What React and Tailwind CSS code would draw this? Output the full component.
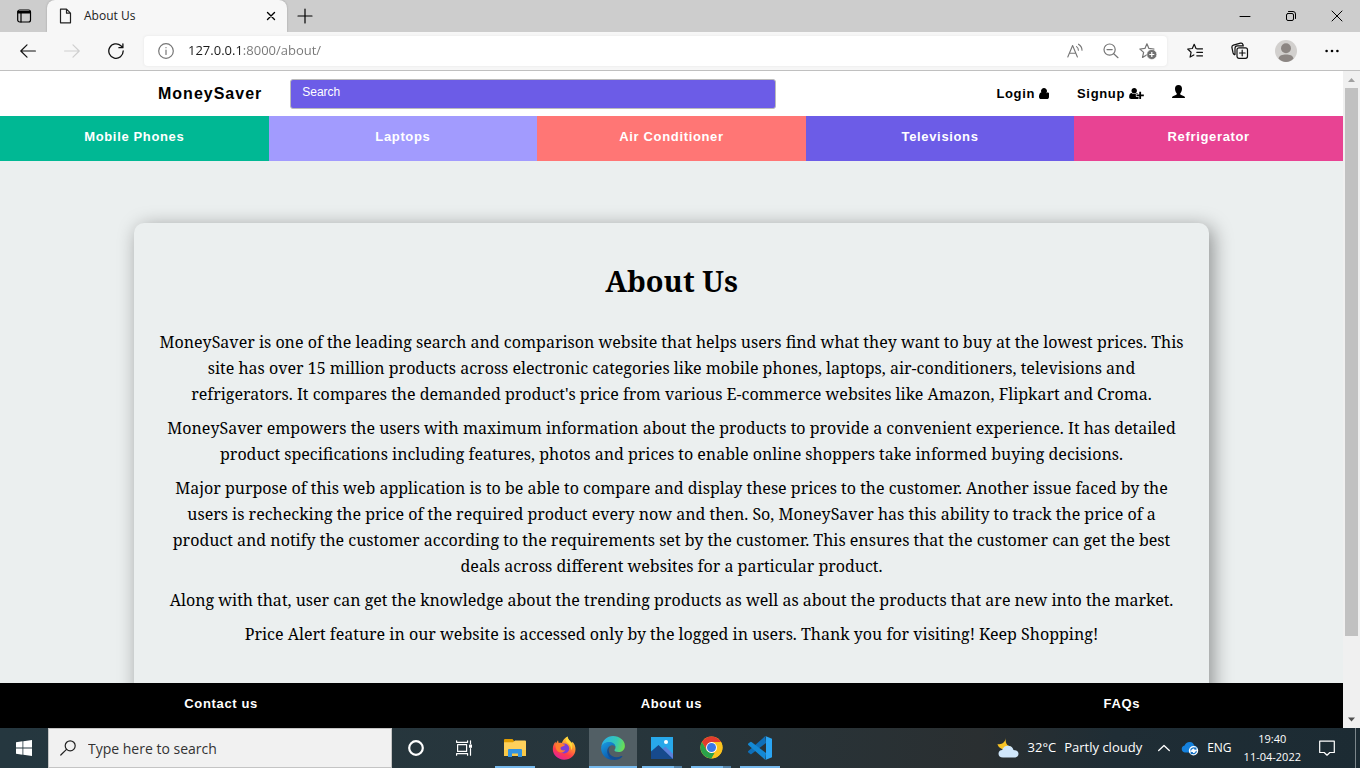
import React from "react";

const Line = ({ className = "size-4", children, w = 1.2, box = 16 }) => (
  <svg
    className={className}
    viewBox={`0 0 ${box} ${box}`}
    fill="none"
    stroke="currentColor"
    strokeWidth={w}
    strokeLinecap="round"
    strokeLinejoin="round"
    aria-hidden="true"
  >
    {children}
  </svg>
);

const IconButton = ({ label, className = "", children }) => (
  <button
    type="button"
    aria-label={label}
    className={`flex shrink-0 items-center justify-center ${className}`}
  >
    {children}
  </button>
);

const STAR = "M7.2 1.2 9 5.4l4.6.5-3.4 3.1 1 4.6-4-2.4-4 2.4 1-4.6L.8 5.9l4.6-.5z";

function TabStrip() {
  return (
    <div className="flex h-8 shrink-0 items-stretch bg-[#cdcdcd]">
      <IconButton label="Tab actions" className="w-12">
        <Line className="size-4" w={1.2}>
          <rect x="1.7" y="2" width="12.8" height="12" rx="2" />
          <path d="M2 3.600h12.200M2 4.800h12.200M5 5v9" />
        </Line>
      </IconButton>
      <div className="-ml-px flex w-60 items-center rounded-t-lg bg-[#f7f7f7] pr-2 pl-[11px] shadow-[0_0_2px_#999]">
        <Line className="size-4 text-[#222]">
          <path d="M2.500 1.200h6l4 4v9.600h-10zM8.500 1.200v4h4" />
        </Line>
        <span className="ml-[10px] flex-1 text-[12px] text-[#222]">About Us</span>
        <IconButton label="Close tab" className="size-4">
          <Line w={1.4}>
            <path d="m4.500 4.500 7 7m0-7-7 7" />
          </Line>
        </IconButton>
      </div>
      <IconButton label="New tab" className="w-[35px]">
        <Line w={1.2}>
          <path d="M8 1v14M1 8h14" />
        </Line>
      </IconButton>
      <div className="ml-auto flex">
        <IconButton label="Minimize" className="w-[46px]">
          <Line w={1} className="size-3" box={12}>
            <path d="M1 6.500h10" />
          </Line>
        </IconButton>
        <IconButton label="Restore" className="w-[46px]">
          <Line w={1} className="size-3" box={12}>
            <rect x="1.500" y="3.500" width="7" height="7" rx="1.500" />
            <path d="M3.500 1.500H8a2.500 2.500 0 0 1 2.500 2.500v4.500" />
          </Line>
        </IconButton>
        <IconButton label="Close window" className="w-[46px]">
          <Line w={1} className="size-3" box={12}>
            <path d="m1 1 10 10m0-10L1 11" />
          </Line>
        </IconButton>
      </div>
    </div>
  );
}

function Toolbar() {
  return (
    <div className="flex h-[39px] shrink-0 items-center border-b border-[#c0c0c0] bg-[#f7f7f7] pl-5">
      <IconButton label="Back" className="size-4 text-[#111]">
        <Line>
          <path d="M.8 8h14.600M7 1.800.8 8 7 14.200" />
        </Line>
      </IconButton>
      <IconButton label="Forward" className="ml-7 size-4 text-[#cfcfcf]">
        <Line>
          <path d="M.6 8h14.600M9 1.800 15.200 8 9 14.200" />
        </Line>
      </IconButton>
      <IconButton label="Refresh" className="ml-7 size-4 text-[#111]">
        <Line w={1.3}>
          <path d="M15.200 8a7.200 7.200 0 1 1-2.300-5.200l1.900 1.800M14.900.8v3.900h-4" />
        </Line>
      </IconButton>
      <div className="ml-5 flex h-[30px] min-w-0 flex-1 items-center rounded bg-white pr-[10px] pl-[14px] shadow-[0_0_3px_#e4e4e4]">
        <IconButton label="View site information" className="size-4 text-[#767676]">
          <Line w={1.2}>
            <circle cx="8" cy="8" r="7.300" />
            <path d="M8 7v4.500M8 4.500v.2" />
          </Line>
        </IconButton>
        <input
          aria-label="Address"
          defaultValue="127.0.0.1:8000/about/"
          className="ml-[14px] min-w-0 flex-1 bg-[linear-gradient(to_right,#1b1b1b_54px,#767676_54px)] bg-clip-text text-[13px] text-transparent outline-none"
        />
        <div className="flex items-center gap-5 text-[#767676]">
          <IconButton label="Read aloud" className="size-4">
            <Line w={1.1}>
              <path d="M.8 14 5.600 2.500 10.400 14M2.500 10.200h6.300M9.500 3.600c1.300.9 1.900 2.100 1.900 3.600M11.500 1.200c2.300 1.500 3.500 3.500 3.500 6" />
            </Line>
          </IconButton>
          <IconButton label="Zoom" className="size-4">
            <Line w={1.2}>
              <circle cx="6.600" cy="6.600" r="5.600" />
              <path d="M4 6.600h5.200M10.700 10.700l4.300 4" />
            </Line>
          </IconButton>
          <IconButton label="Add to favorites" className="size-[18px]">
            <svg viewBox="0 0 18 18" className="size-[18px]" aria-hidden="true">
              <path d={STAR} transform="translate(0 .5) scale(1.100)" fill="none" stroke="currentColor" strokeWidth="1.100" strokeLinejoin="round" />
              <circle cx="12.800" cy="12.500" r="5" fill="#6f6f6f" stroke="#fff" strokeWidth=".6" />
              <path d="M12.800 10v5M10.300 12.500h5" stroke="#fff" strokeWidth="1.200" />
            </svg>
          </IconButton>
        </div>
      </div>
      <div className="flex items-center text-[#111]">
        <IconButton label="Favorites" className="ml-5 size-4">
          <Line w={1.2}>
            <path d="M9 5.500 7.200 1.300 5.300 5.500l-4.600.5 3.400 3.200-1 4.900 3.700-2.200M9.800 5.800H15.500M9.800 9.300h5.700M9.800 12.800h5.700" />
          </Line>
        </IconButton>
        <IconButton label="Collections" className="ml-7 size-[18px]">
          <Line className="size-[18px]" box={18} w={1.2}>
            <rect x="6" y="5.800" width="10.500" height="10.500" rx="2" />
            <path d="M11.200 8.200v5.600M8.500 11h5.600M3.600 12.800C2.700 12.400 2.300 11.800 2.100 11L.9 5.500c-.2-1.200.3-2 1.500-2.400L9.500 1.200c1.300-.3 2.200.3 2.600 1.800M4 12.500V6.200c0-1.500 1-2.400 2.300-2.400h6.200" />
          </Line>
        </IconButton>
        <IconButton label="Profile" className="ml-[26px] size-[22px]">
          <svg viewBox="0 0 22 22" className="size-[22px]" aria-hidden="true">
            <circle cx="11" cy="11" r="11" fill="#d2d0ce" />
            <circle cx="11" cy="8.300" r="5" fill="#8c8683" />
            <path d="M3.500 18.500c.8-3.300 3.800-4 7.500-4s6.700.7 7.500 4C16.500 20.800 14 22 11 22s-5.500-1.200-7.500-3.500z" fill="#8c8683" />
          </svg>
        </IconButton>
        <IconButton label="Settings and more" className="mr-5 ml-[27px] size-4">
          <svg viewBox="0 0 16 16" className="size-4" aria-hidden="true">
            <circle cx="2.600" cy="8" r="1.300" />
            <circle cx="8" cy="8" r="1.300" />
            <circle cx="13.400" cy="8" r="1.300" />
          </svg>
        </IconButton>
      </div>
    </div>
  );
}

const CATEGORIES = [
  ["Mobile Phones", "bg-[#00b894]"],
  ["Laptops", "bg-[#a29bfe]"],
  ["Air Conditioner", "bg-[#ff7675]"],
  ["Televisions", "bg-[#6c5ce7]"],
  ["Refrigerator", "bg-[#e84393]"],
];

const PARAGRAPHS = [
  "MoneySaver is one of the leading search and comparison website that helps users find what they want to buy at the lowest prices. This site has over 15 million products across electronic categories like mobile phones, laptops, air-conditioners, televisions and refrigerators. It compares the demanded product's price from various E-commerce websites like Amazon, Flipkart and Croma.",
  "MoneySaver empowers the users with maximum information about the products to provide a convenient experience. It has detailed product specifications including features, photos and prices to enable online shoppers take informed buying decisions.",
  "Major purpose of this web application is to be able to compare and display these prices to the customer. Another issue faced by the users is rechecking the price of the required product every now and then. So, MoneySaver has this ability to track the price of a product and notify the customer according to the requirements set by the customer. This ensures that the customer can get the best deals across different websites for a particular product.",
  "Along with that, user can get the knowledge about the trending products as well as about the products that are new into the market.",
  "Price Alert feature in our website is accessed only by the logged in users. Thank you for visiting! Keep Shopping!",
];

const UserIcon = () => (
  <svg viewBox="0 128 1280 1408" className="h-[11px] w-[10px]" fill="currentColor" aria-hidden="true">
    <path d="M1280 1271q0 120-73 189.500t-194 69.500h-746q-121 0-194-69.500t-73-189.500q0-53 3.500-103.500t14-109 26.500-108.500 43-97.500 62-81 85.500-53.500 111.500-20q9 0 42 21.500t74.500 48 108 48 133.500 21.500 133.500-21.500 108-48 74.500-48 42-21.500q61 0 111.500 20t85.500 53.500 62 81 43 97.500 26.500 108.500 14 109 3.500 103.500zM1024 512q0 159-112.500 271.500t-271.500 112.500-271.500-112.500-112.500-271.500 112.500-271.500 271.500-112.500 271.500 112.500 112.500 271.500z" />
  </svg>
);

const UserPlusIcon = () => (
  <svg viewBox="0 128 2048 1536" className="h-[11px] w-[15px]" fill="currentColor" aria-hidden="true">
    <path d="M704 896q-159 0-271.500-112.500t-112.500-271.500 112.500-271.500 271.500-112.500 271.500 112.500 112.500 271.500-112.500 271.500-271.500 112.500zM1664 1024h352q13 0 22.500 9.500t9.500 22.500v192q0 13-9.500 22.500t-22.500 9.500h-352v352q0 13-9.500 22.500t-22.500 9.500h-192q-13 0-22.500-9.500t-9.500-22.500v-352h-352q-13 0-22.500-9.500t-9.500-22.500v-192q0-13 9.500-22.500t22.500-9.500h352v-352q0-13 9.500-22.500t22.500-9.500h192q13 0 22.500 9.500t9.500 22.500v352zM928 1248q0 52 38 90t90 38h256v238q-68 50-171 50h-874q-121 0-194-69t-73-190q0-53 3.500-103.500t14-109 26.500-108.500 43-97.500 62-81 85.500-53.500 111.500-20q19 0 39 17 79 61 154.500 91.500t164.500 30.500 164.500-30.500 154.500-91.500q20-17 39-17 132 0 217 96h-223q-52 0-90 38t-38 90v192z" />
  </svg>
);

function Site() {
  return (
    <div className="flex min-w-0 flex-1 flex-col overflow-hidden bg-[#ebefef] font-['Liberation_Sans',Arial,sans-serif] text-[13px] font-bold tracking-wider">
      <header className="flex h-[45px] shrink-0 items-center bg-white px-[158px] text-black">
        <a href="/" className="text-[16px] tracking-[1px]">
          MoneySaver
        </a>
        <input
          type="search"
          aria-label="Search"
          placeholder="Search"
          className="ml-7 h-[30px] w-[486px] rounded-[3px] border border-[#bbb] bg-[#6c5ce7] px-[11px] pb-[3px] text-[12px] font-normal tracking-normal text-white outline-none placeholder:text-white"
        />
        <nav className="ml-auto flex items-center gap-7">
          <a href="/login" className="flex items-center gap-1">
            Login <UserIcon />
          </a>
          <a href="/signup" className="flex items-center gap-1">
            Signup <UserPlusIcon />
          </a>
          <a href="/profile" aria-label="Profile" className="pb-1">
            <svg viewBox="0 0 13 13" className="size-[13px]" aria-hidden="true">
              <path d="M6.500 0C8.800 0 10 1.500 10 3.700c0 1.800-.7 3.600-1.700 4.500v.8c0 .6.300.8.9 1l2.300.9c1 .4 1.500.9 1.500 2.100H0c0-1.200.5-1.700 1.500-2.100l2.300-.9c.6-.2.9-.4.9-1v-.8C3.700 7.300 3 5.500 3 3.700 3 1.500 4.200 0 6.500 0z" />
            </svg>
          </a>
        </nav>
      </header>
      <nav className="grid h-[45px] shrink-0 grid-cols-5 text-center leading-[42px] text-white">
        {CATEGORIES.map(([name, color]) => (
          <a key={name} href="#" className={color}>
            {name}
          </a>
        ))}
      </nav>
      <main className="min-h-0 flex-1 overflow-hidden px-[10%] pt-[62px] font-['Noto_Serif',Cambria,serif] font-normal tracking-normal text-black">
        <article className="min-h-[520px] rounded-[10px] bg-[#ebefef] px-6 pt-9 text-center text-[16px] leading-[26px] shadow-[4px_4px_20px_rgba(0,0,0,0.4)]">
          <h1 className="mb-[26px] text-[29px] leading-[44px] font-bold">About Us</h1>
          {PARAGRAPHS.map((text) => (
            <p key={text} className="mb-2">
              {text}
            </p>
          ))}
        </article>
      </main>
      <footer className="relative -mx-1 grid h-[45px] shrink-0 grid-cols-3 bg-black text-center leading-[42px] text-white">
        <a href="#">Contact us</a>
        <a href="#">About us</a>
        <a href="#">FAQs</a>
      </footer>
    </div>
  );
}

function Scrollbar() {
  return (
    <div className="flex w-[17px] shrink-0 flex-col items-center bg-[#f0f0f0]" aria-hidden="true">
      <svg viewBox="0 0 17 17" className="size-[17px] shrink-0">
        <path d="M5 11l3.500-4 3.500 4z" fill="#a0a0a0" />
      </svg>
      <div className="min-h-0 w-[13px] grow-[88] bg-[#c1c1c1]" />
      <div className="min-h-0 grow-[12]" />
      <svg viewBox="0 0 17 17" className="size-[17px] shrink-0">
        <path d="M5 6.500l3.500 4 3.500-4z" fill="#505050" />
      </svg>
    </div>
  );
}

const ExplorerIcon = () => (
  <svg viewBox="0 0 22 18" className="w-[22px]" aria-hidden="true">
    <path d="M0 1a1 1 0 0 1 1-1h7.500l1.500 2v3H0z" fill="#e09c00" />
    <path d="M0 3.200h9l2-1.700h10a1 1 0 0 1 1 1V17H0z" fill="#fdd05b" />
    <path d="M0 11h22v6H0z" fill="#f9c846" />
    <path d="M4 18v-7a1 1 0 0 1 1-1h12a1 1 0 0 1 1 1v7h-4v-3.500H8V18z" fill="#3393df" />
  </svg>
);

const FirefoxIcon = () => (
  <svg viewBox="0 0 24 24" className="size-6" aria-hidden="true">
    <defs>
      <linearGradient id="ff" x1=".8" y1="0" x2=".3" y2="1">
        <stop offset="0" stopColor="#fff04a" />
        <stop offset=".35" stopColor="#ff9b2c" />
        <stop offset=".7" stopColor="#ff3b4b" />
        <stop offset="1" stopColor="#e0219c" />
      </linearGradient>
    </defs>
    <path d="M15.500.5c.5 2.600 1.600 3.700 3.200 5.200.6.500 1 1 1.200 1.500l.6-1.400c2 2.200 3 4.800 3 7.400 0 6-5 10.500-11.300 10.500C5.800 23.700.8 18.900.8 13c0-3 1-5.500 2.700-7.300l.4 1.800L6 4.200l.7 2.900c1-.4 2.200-.4 3.200 0 .8-3 2.800-5.300 5.600-6.600z" fill="url(#ff)" />
    <circle cx="12.200" cy="12.500" r="5" fill="#7a3fd8" />
    <path d="M3.600 8.200c1.800-1.300 4.300-1.700 6.500-.4 1 .5 1.700.7 3 .8-.6 1.500-1.600 1.800-3.200 2.100-1.100.3-1.600 1-1.200 2.300.8 1.800 3 1.600 4.500 1-1.200 2.800-5 3.400-7.300 1.600-1.900-1.500-2.600-4.300-2.300-7.400z" fill="#ff7d2d" />
    <path d="M15 6.500c3 1.500 4.500 4.500 4 7.500 1.300-.8 1.600-3 .9-6.800-1-1.700-3.900-3-4.400-6.700-2 1.800-2 4.500-.5 6z" fill="#ffd93b" />
  </svg>
);

const EdgeIcon = () => (
  <svg viewBox="0 0 24 24" className="size-6" aria-hidden="true">
    <defs>
      <linearGradient id="eg" x1="0" y1=".4" x2="1" y2=".6">
        <stop offset="0" stopColor="#2bb0e8" />
        <stop offset=".6" stopColor="#35c8b4" />
        <stop offset="1" stopColor="#6ee04c" />
      </linearGradient>
      <linearGradient id="eb" x1="0" y1="0" x2=".6" y2="1">
        <stop offset="0" stopColor="#1b9de2" />
        <stop offset="1" stopColor="#0a55a8" />
      </linearGradient>
    </defs>
    <path d="M.4 10.500C1.200 4.500 6.200.1 12 .1c6.600 0 11.900 4.500 11.900 9.800 0 3.700-3 6.100-6.300 6.100-2.900 0-4.200-.9-4.200-1.700 0-.6 1.100-1 1.100-2.700 0-2.800-2.800-5-6.300-5C5 6.600 2 8 .4 10.500z" fill="url(#eg)" />
    <path d="M.1 12.200C.1 8.500 4 6 8 6c3.500 0 6.400 2 6.500 5-1-1.300-2.500-2-4-1.700C7.600 10 6 12.600 6.400 15.500c.5 4 3.300 6.800 6.600 8.400C5.700 24.400.1 19 .1 12.200z" fill="url(#eb)" />
    <path d="M10 10c-2 .9-2.900 3.600-2 6.200 1.700 4.700 7.600 6.500 12.200 3.900.8-.4 1.400 0 1 .6C19 23.300 16 24 13 23.900 8.500 22.500 6 18.800 6.300 15c.2-2.300 1.700-4.300 3.700-5z" fill="#144d93" />
  </svg>
);

const PhotosIcon = () => (
  <svg viewBox="0 0 22 22" className="size-[22px]" aria-hidden="true">
    <path d="M0 0h22v22H0z" fill="#28a8ea" />
    <path d="M10 13l4.500-3.500L22 17v5H10z" fill="#5c7fd8" />
    <path d="M0 14.500 7.500 8 22 22H0z" fill="#174a8c" />
    <circle cx="15" cy="5" r="2" fill="#fff" />
  </svg>
);

const ChromeIcon = () => (
  <svg viewBox="0 0 24 24" className="size-[23px]" aria-hidden="true">
    <circle cx="12" cy="12" r="11.500" fill="#fcc31e" />
    <path d="M2 6.300A11.500 11.500 0 0 1 22 6.300H12L7 14.900z" fill="#e33b2e" />
    <path d="M2 6.300 7 14.900A5.700 5.700 0 0 0 12 17.700h3.500L12 23.500A11.500 11.500 0 0 1 2 6.300z" fill="#2aa24b" />
    <path d="M17 14.900 12 23.500A11.500 11.500 0 0 0 22 6.300H12z" fill="#fcc31e" />
    <circle cx="12" cy="12" r="5.700" fill="#fff" />
    <circle cx="12" cy="12" r="4.700" fill="#3b78e7" />
  </svg>
);

const CodeIcon = () => (
  <svg viewBox="0 0 24 24" className="size-6" aria-hidden="true">
    <path d="M17.300 0 18 7 3.500 17.900a.9.900 0 0 1-1.200 0L.3 16.400a.9.900 0 0 1 0-1.300z" fill="#0f6fb8" />
    <path d="M17.300 24 .3 8.900a.9.900 0 0 1 0-1.300l2-1.500a.9.900 0 0 1 1.200 0L18 17z" fill="#1489d4" />
    <path d="M17.300 0 24 2.800v18.400L17.300 24c.5-.2.700-.6.700-1.200V1.200c0-.6-.2-1-.7-1.200z" fill="#2aa5f3" />
  </svg>
);

const APPS = [
  { label: "File Explorer", icon: ExplorerIcon, open: 1 },
  { label: "Firefox", icon: FirefoxIcon },
  { label: "Microsoft Edge", icon: EdgeIcon, active: true },
  { label: "Photos", icon: PhotosIcon, open: 2 },
  { label: "Google Chrome", icon: ChromeIcon, open: 2 },
  { label: "Visual Studio Code", icon: CodeIcon, open: 1 },
];

function Taskbar() {
  return (
    <div className="flex h-10 shrink-0 items-stretch bg-[linear-gradient(to_right,#25373f,#27353b_50%,#2a2f31_72%,#1f2d35_82%,#1c2b33)] text-white">
      <IconButton label="Start" className="w-12">
        <svg viewBox="0 0 16 16" className="size-4" fill="#fff" aria-hidden="true">
          <path d="M0 2.200 6.500 1.300V7.600H0zM7.300 1.200 16 0v7.600H7.300zM0 8.400h6.500v6.300L0 13.800zM7.300 8.400H16V16l-8.700-1.200z" />
        </svg>
      </IconButton>
      <label className="flex w-[344px] items-center gap-3 border border-[#c4c4c4] bg-[#f1f1f1] pl-[11px] text-[#222]">
        <Line w={1.2}>
          <circle cx="10.200" cy="5.800" r="5" />
          <path d="M6.500 9.300.8 15" />
        </Line>
        <input
          aria-label="Type here to search"
          placeholder="Type here to search"
          className="min-w-0 flex-1 bg-transparent text-[14px] outline-none placeholder:text-[#333]"
        />
      </label>
      <IconButton label="Cortana" className="w-12">
        <Line w={2.2}>
          <circle cx="8" cy="8" r="6.800" />
        </Line>
      </IconButton>
      <IconButton label="Task view" className="w-12">
        <Line w={1.2}>
          <rect x="1.600" y="4.600" width="9" height="6.800" />
          <path d="M.6.800v1.500h11V.8M.6 15.200v-1.500h11v1.500M14.500.8v3M14.500 8.500v6.700" />
          <rect x="13.600" y="5.200" width="2" height="2" fill="currentColor" />
        </Line>
      </IconButton>
      <div className="ml-[3px] flex gap-px">
        {APPS.map(({ label, icon: Icon, open, active }) => (
          <button
            key={label}
            type="button"
            aria-label={label}
            className={`flex w-12 flex-col items-center ${active ? "bg-[#525f65]" : ""}`}
          >
            <span className="flex min-h-0 flex-1 items-center pt-px">
              <Icon />
            </span>
            <span className={`flex h-[2px] ${active ? "w-full" : "w-10"}`}>
              {(open || active) && <span className="flex-1 bg-[#76b9ed]" />}
              {open === 2 && <span className="w-2 bg-[#5584a9]" />}
            </span>
          </button>
        ))}
      </div>
      <div className="ml-auto flex items-center">
        <button type="button" className="flex items-center text-[13px]">
          <svg viewBox="0 0 22 20" className="w-[22px]" aria-hidden="true">
            <path d="M9 0C8 4 9.500 8 14 8.500 11.500 12 8 12.500 5 11 2.500 10 .8 8 .5 6 5 7 8 4 9 0z" fill="#f7c325" />
            <path d="M6 19.500c-3 0-4.500-1.600-4.500-3.700 0-2.200 1.600-3.600 3.700-3.700C6 9 8.600 7.500 11.500 7.800c2.700.2 4.500 2 5 4.200 3 0 5 1.500 5 3.800s-1.800 3.700-4.300 3.700z" fill="#cfe6fa" />
          </svg>
          <span className="ml-[9px]">32°C</span>
          <span className="ml-2">Partly cloudy</span>
        </button>
        <IconButton label="Show hidden icons" className="ml-4 w-3">
          <Line w={1.3} className="size-3" box={12}>
            <path d="m.7 8.500 5.300-5 5.300 5" />
          </Line>
        </IconButton>
        <IconButton label="OneDrive" className="ml-[11px] w-[18px]">
          <svg viewBox="0 0 18 15" className="w-[18px]" aria-hidden="true">
            <path d="M3.700 11.500A3.500 3.500 0 0 1 3.600 4.600C4.500 2 6.500.8 9 1c2.200.2 3.700 1.600 4.200 3.500 2.300.2 3.500 1.800 3.500 3.600 0 2-1.500 3.400-3.300 3.400z" fill="#1581dc" />
            <circle cx="12.500" cy="9.800" r="4.700" fill="#fff" />
            <path d="M9.600 9.500a3 3 0 0 1 5.200-1.500V6.500M15.400 10.200a3 3 0 0 1-5.200 1.500v1.500M14.800 8h-1.700M10.200 11.700h1.700" fill="none" stroke="#1270c4" strokeWidth="1.200" />
          </svg>
        </IconButton>
        <button type="button" className="ml-2 text-[12px]">
          ENG
        </button>
        <button type="button" className="ml-3 text-center text-[11px] leading-[18px]">
          <span className="block">19:40</span>
          <span className="block">11-04-2022</span>
        </button>
        <IconButton label="Notifications" className="ml-[18px] w-4">
          <Line w={1.2}>
            <path d="M.7 1.200h14.600v11.300h-4.500L8 15.200l-2.800-2.700H.7z" />
          </Line>
        </IconButton>
        <div className="ml-5 h-10 w-[5px] border-l border-[#7c868b]" />
      </div>
    </div>
  );
}

export default function App() {
  return (
    <div className="flex h-screen flex-col overflow-hidden font-['Open_Sans','Noto_Sans',sans-serif]">
      <TabStrip />
      <Toolbar />
      <div className="flex min-h-0 flex-1">
        <Site />
        <Scrollbar />
      </div>
      <Taskbar />
    </div>
  );
}
